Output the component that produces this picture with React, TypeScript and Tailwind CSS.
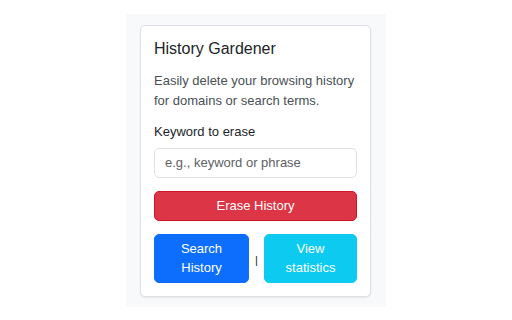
import React from "react";

export default function App() {
  return (
    <div
      className="w-[512px] h-[320px] bg-white pt-[14px] pl-[126px]"
      style={{ fontFamily: '"Liberation Sans", Arial, sans-serif' }}
    >
      <div className="w-[260px] bg-[#f8f9fa] pt-[11px] pl-[14px] pb-[10px]">
        <div className="w-[231px] bg-white border border-[#dee2e6] rounded-[5px] shadow-[0_1px_2px_rgba(0,0,0,0.08)] p-[13px]">
          <h5 className="text-[16px] leading-[19.2px] text-[#212529] mb-[13px]">History Gardener</h5>
          <p className="text-[13px] leading-[19.5px] text-[#4a4f55] mb-[12px]">
            Easily delete your browsing history for domains or search terms.
          </p>
          <label className="block text-[13px] leading-[19.5px] text-[#212529] mb-[6px]">Keyword to erase</label>
          <input
            type="text"
            placeholder="e.g., keyword or phrase"
            className="block w-full h-[30px] px-[10px] text-[13px] text-[#212529] placeholder:text-[#5c6166] border border-[#dee2e6] rounded-[5px] outline-none"
          />
          <button className="block w-full h-[30px] mt-[13px] bg-[#dc3545] border border-[#d0162a] rounded-[5px] text-white text-[13px]">
            Erase History
          </button>
          <div className="flex items-center mt-[13px]">
            <button className="w-[95px] h-[49px] bg-[#0d6efd] border border-[#0d6efd] rounded-[5px] text-white text-[13px] leading-[19.5px]">
              Search
              <br />
              History
            </button>
            <span className="flex-1 text-center text-[11px] leading-none text-[#212529] mt-[4px]">|</span>
            <button className="w-[93px] h-[49px] bg-[#0dcaf0] border border-[#0dcaf0] rounded-[5px] text-white text-[13px] leading-[19.5px]">
              View
              <br />
              statistics
            </button>
          </div>
        </div>
      </div>
    </div>
  );
}
